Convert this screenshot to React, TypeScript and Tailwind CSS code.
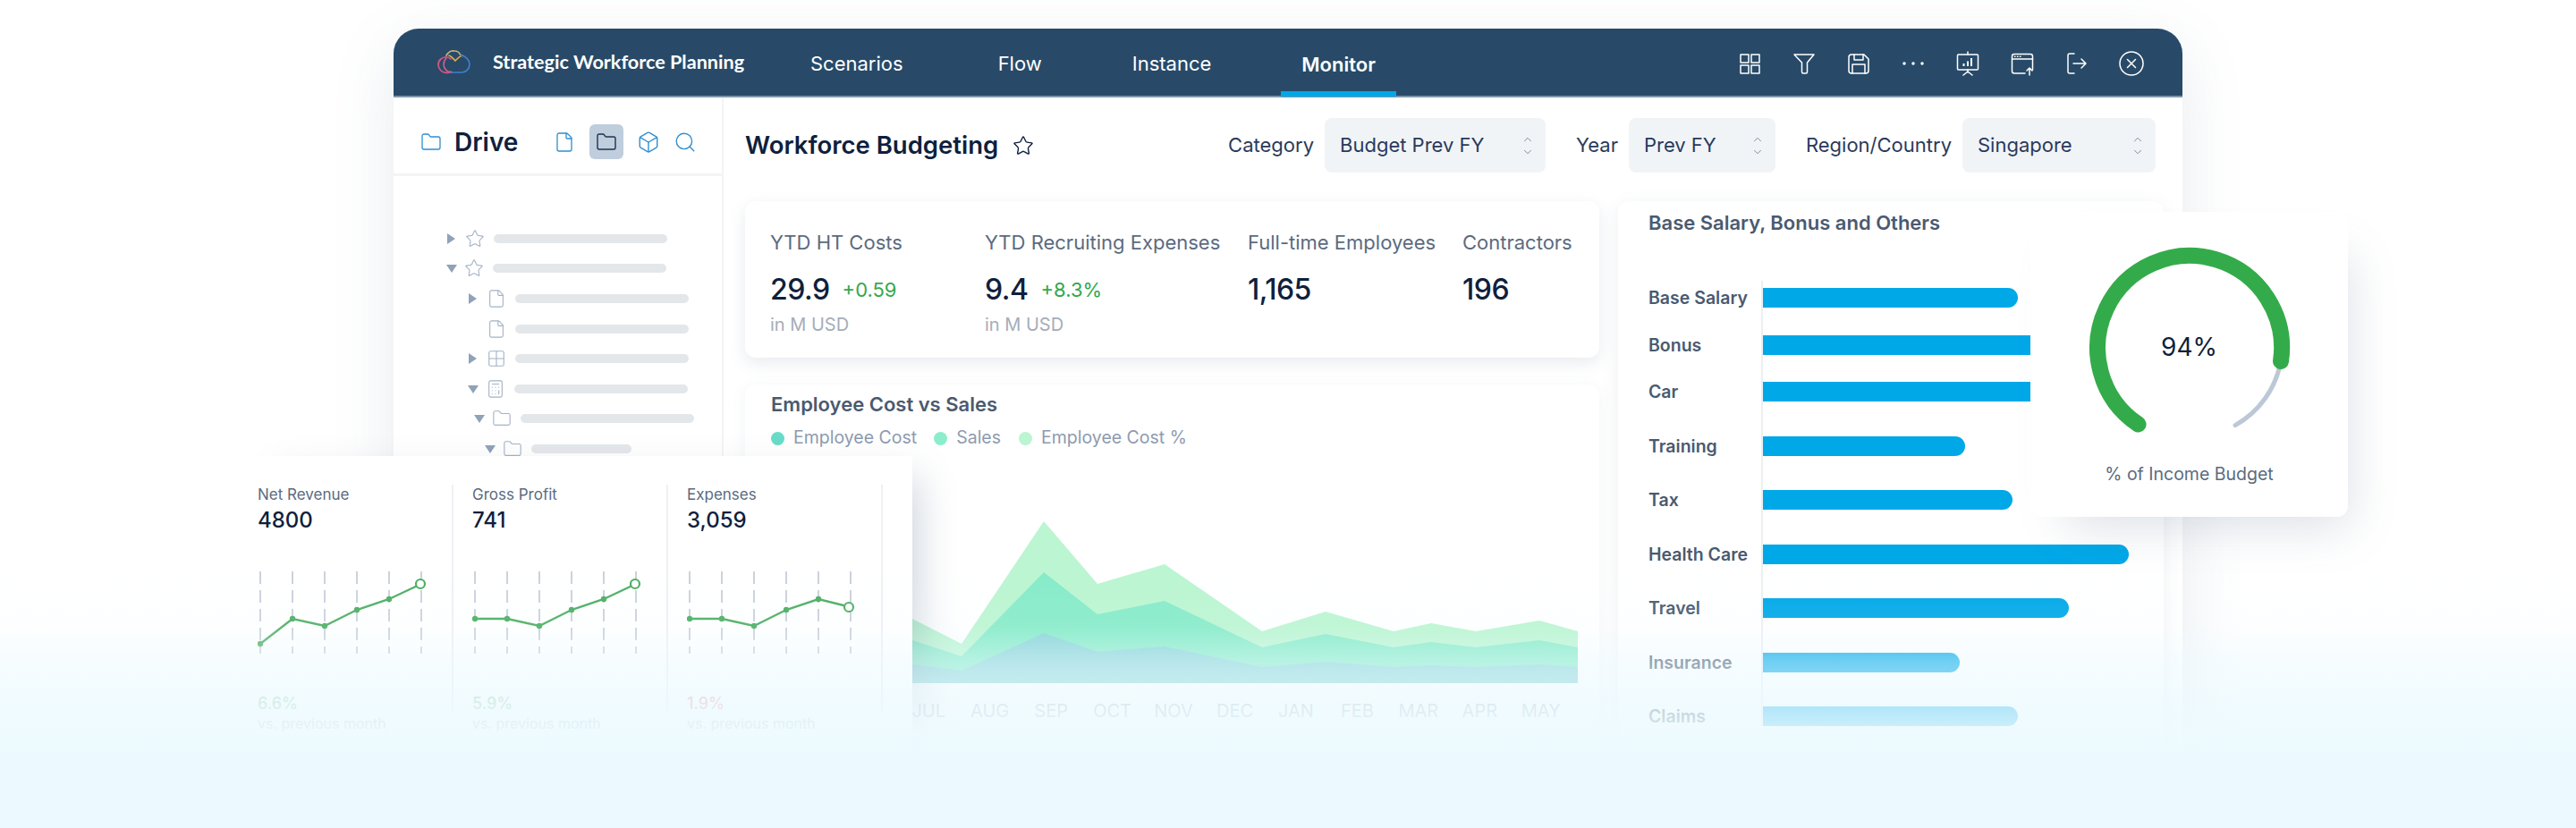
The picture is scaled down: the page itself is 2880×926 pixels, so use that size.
import React from 'react';
import { Box, ChevronDown, ChevronUp, File, Folder, Grid2x2, Calculator, Search, Star } from 'lucide-react';

const navItems = [
  { label: 'Scenarios', cls: 'ml-[50px]' },
  { label: 'Flow', cls: 'ml-[60px]' },
  { label: 'Instance', cls: 'ml-[55px]' },
];

const kpis = [
  { label: 'YTD HT Costs', value: '29.9', delta: '+0.59', sub: 'in M USD', width: 'w-[240px]' },
  { label: 'YTD Recruiting Expenses', value: '9.4', delta: '+8.3%', sub: 'in M USD', width: 'w-[294px]' },
  { label: 'Full-time Employees', value: '1,165', delta: '', sub: '', width: 'w-[240px]' },
  { label: 'Contractors', value: '196', delta: '', sub: '', width: 'w-[150px]' },
];

const bars = [
  { label: 'Base Salary', width: 285, pad: 'pt-[8px]' },
  { label: 'Bonus', width: 330, pad: 'pt-[31px]' },
  { label: 'Car', width: 330, pad: 'pt-[30px]' },
  { label: 'Training', width: 226, pad: 'pt-[39px]' },
  { label: 'Tax', width: 279, pad: 'pt-[38px]' },
  { label: 'Health Care', width: 409, pad: 'pt-[39px]' },
  { label: 'Travel', width: 342, pad: 'pt-[38px]' },
  { label: 'Insurance', width: 220, pad: 'pt-[39px]' },
  { label: 'Claims', width: 285, pad: 'pt-[38px]' },
];

const months = ['JUL', 'AUG', 'SEP', 'OCT', 'NOV', 'DEC', 'JAN', 'FEB', 'MAR', 'APR', 'MAY'];

const chartX = [1020, 1075, 1167, 1227, 1302, 1411, 1482, 1558, 1600, 1650, 1721, 1764];
const layers = [
  { fill: '#bbf5d1', ys: [692, 720, 583, 653, 631, 706, 684, 706, 697, 706, 694, 706] },
  { fill: '#86ebc8', ys: [716, 734, 640, 687, 672, 724, 709, 724, 718, 724, 716, 724] },
  { fill: '#88d4d8', ys: [743, 750, 708, 729, 723, 746, 740, 746, 744, 746, 743, 746] },
];

const sparkX = [3, 39, 75, 111, 147, 183];
const sparks = [
  { label: 'Net Revenue', value: '4800', pct: '6.6%', pctColor: 'text-[#9fd3ad]', ys: [81, 53, 61, 43, 31, 14], lastX: 182 },
  { label: 'Gross Profit', value: '741', pct: '5.9%', pctColor: 'text-[#9fd3ad]', ys: [53, 53, 61, 43, 31, 14], lastX: 182 },
  { label: 'Expenses', value: '3,059', pct: '1.9%', pctColor: 'text-[#eda3ae]', ys: [53, 53, 61, 43, 31, 40], lastX: 181 },
];

const tree = [
  { pad: 'pl-[59px]', tri: 'right', icon: 'star', bar: 'w-[194px]' },
  { pad: 'pl-[58px]', tri: 'down', icon: 'star', bar: 'w-[194px]' },
  { pad: 'pl-[83px]', tri: 'right', icon: 'file', bar: 'w-[194px]' },
  { pad: 'pl-[83px]', tri: 'none', icon: 'file', bar: 'w-[194px]' },
  { pad: 'pl-[83px]', tri: 'right', icon: 'grid', bar: 'w-[194px]' },
  { pad: 'pl-[82px]', tri: 'down', icon: 'calc', bar: 'w-[194px]' },
  { pad: 'pl-[89px]', tri: 'down', icon: 'folder', bar: 'w-[194px]' },
  { pad: 'pl-[101px]', tri: 'down', icon: 'folder', bar: 'w-[112px]' },
];

const Triangle = ({ dir }: { dir: string }) => (
  <svg width="14" height="14" viewBox="0 0 14 14" className="shrink-0">
    {dir === 'right' && <polygon points="1,1 10,7 1,13" fill="#8fa2b8" />}
    {dir === 'down' && <polygon points="1,3 13,3 7,12" fill="#8fa2b8" />}
  </svg>
);

const TreeIcon = ({ name }: { name: string }) => {
  const cls = 'shrink-0 text-[#a3b2c6]';
  if (name === 'star') return <Star size={22} strokeWidth={1.2} className={cls} />;
  if (name === 'file') return <File size={22} strokeWidth={1.2} className={cls} />;
  if (name === 'grid') return <Grid2x2 size={22} strokeWidth={1.2} className={cls} />;
  if (name === 'calc') return <Calculator size={22} strokeWidth={1.2} className={cls} />;
  return <Folder size={22} strokeWidth={1.2} className={cls} />;
};

const Logo = () => (
  <svg width="60" height="42" viewBox="0 0 60 42" fill="none" strokeWidth="1.7" strokeLinecap="round" className="shrink-0">
    <path d="M24 31C21 33 16 33 13 30C9 26 9 20 13 17C16 14 21 14 24 17" stroke="#d9597c" />
    <path d="M25 32C20 32 16 28 16 23C16 20 17 18 19 16" stroke="#c65f8f" />
    <path d="M19 13C21 9 25 7.5 28 8C31 8 34 10 35 13" stroke="#c3b27a" />
    <path d="M22 13C25 14 27 17 29 19C31 17 33 14 37 13" stroke="#e0a650" />
    <path d="M35 13C40 13 45 18 45 23C45 28 41 32 36 32H25" stroke="#3f80cf" />
  </svg>
);

const HeaderIcon = ({ children }: { children: React.ReactNode }) => (
  <svg width="28" height="28" viewBox="0 0 28 28" fill="none" stroke="white" strokeWidth="1.5" strokeLinecap="round" strokeLinejoin="round" className="shrink-0">
    {children}
  </svg>
);

const Select = ({ value, width }: { value: string; width: string }) => (
  <div className={`${width} h-[61px] ml-[12px] pl-[17px] pr-[13px] flex items-center justify-between bg-[#f1f4f7] rounded-lg text-[22px] text-[#2a3a5c]`}>
    <span>{value}</span>
    <span className="flex flex-col items-center text-[#6f7c8f]">
      <ChevronUp size={14} strokeWidth={1.5} />
      <ChevronDown size={14} strokeWidth={1.5} />
    </span>
  </div>
);

const App = () => {
  return (
    <div className="relative w-[2880px] h-[926px] overflow-hidden bg-white font-['Inter',sans-serif]">
      <div className="mx-auto mt-[32px] w-[2000px] h-[894px] bg-white rounded-t-[28px] shadow-[0_20px_70px_rgba(90,110,140,0.14)]">
        {/* top bar */}
        <header className="h-[77px] flex items-center bg-[#284a68] rounded-t-[28px] border-b-2 border-[#7f96ab]">
          <div className="pl-[40px] w-[111px]">
            <Logo />
          </div>
          <div className="w-[282px] whitespace-nowrap font-['Lato',sans-serif] font-bold text-[21.6px] text-white">
            Strategic Workforce Planning
          </div>
          {navItems.map((n) => (
            <div key={n.label} className={`${n.cls} px-[23px] h-full pt-[3px] flex items-center text-[22px] text-white`}>
              {n.label}
            </div>
          ))}
          <div className="ml-[55px] px-[23px] h-full flex items-center text-[22px] font-semibold text-white border-b-[6px] border-[#00a8e8] pt-[9px] translate-y-[1px]">
            Monitor
          </div>
          <div className="ml-auto pr-[43px] pt-[2px] flex items-center gap-[33px]">
            <HeaderIcon>
              <rect x="4" y="4" width="9" height="9" />
              <rect x="16" y="4" width="9" height="9" />
              <rect x="4" y="16" width="9" height="9" />
              <rect x="16" y="16" width="9" height="9" />
            </HeaderIcon>
            <HeaderIcon>
              <path d="M3 4H25L17.5 13V23.5C17.5 24.5 17 25 16 25H13C12 25 11.5 24.5 11.5 23.5V13Z" />
            </HeaderIcon>
            <HeaderIcon>
              <path d="M6 4H20L25 9V22C25 24 24 25 22 25H6C4 25 3 24 3 22V7C3 5 4 4 6 4Z" />
              <path d="M9 4V10H19V4" />
              <path d="M7 25V15H21V25" />
            </HeaderIcon>
            <HeaderIcon>
              <circle cx="4" cy="14" r="1" fill="white" />
              <circle cx="14" cy="14" r="1" fill="white" />
              <circle cx="24" cy="14" r="1" fill="white" />
            </HeaderIcon>
            <HeaderIcon>
              <path d="M14 1V4" />
              <rect x="2.5" y="4" width="23" height="17" rx="1" />
              <path d="M14 21V24M14 23L9 27M14 23L19 27" />
              <path d="M9.5 17V14M14 17V11.5M18 17V8" strokeWidth="2" strokeLinecap="butt" />
            </HeaderIcon>
            <HeaderIcon>
              <path d="M17 25H5C3.5 25 2.5 24 2.5 22.5V6C2.5 4.5 3.5 3.5 5 3.5H23C24.5 3.5 25.5 4.5 25.5 6V21" />
              <path d="M2.5 9H25.5" />
              <path d="M5.5 6.2H6M8.5 6.2H9M11.5 6.2H12" />
              <path d="M22 27V19M19 22L22 19L25 22" />
            </HeaderIcon>
            <HeaderIcon>
              <path d="M11 3H6C5 3 4 4 4 5V23C4 24 5 25 6 25H11" />
              <path d="M10 14H24M19 9L24 14L19 19" />
            </HeaderIcon>
            <HeaderIcon>
              <circle cx="14" cy="14" r="13" />
              <path d="M9.5 9.5L18.5 18.5M18.5 9.5L9.5 18.5" />
            </HeaderIcon>
          </div>
        </header>

        <div className="flex">
          {/* sidebar */}
          <aside className="w-[369px] shrink-0 h-[760px] border-r-2 border-[#f3f4f6]">
            <div className="h-[88px] pt-[14px] flex items-center border-b-[3px] border-[#f3f4f6] pl-[30px]">
              <Folder size={24} strokeWidth={1.3} className="text-[#2f8fd0]" />
              <span className="ml-[14px] text-[28px] font-semibold text-[#0f1f3d]">Drive</span>
              <File size={24} strokeWidth={1.3} className="ml-[40px] text-[#2f8fd0]" />
              <span className="ml-[16px] w-[38px] h-[39px] rounded-md bg-[#bfcddd] flex items-center justify-center">
                <Folder size={24} strokeWidth={1.4} className="text-[#1f3350]" />
              </span>
              <Box size={26} strokeWidth={1.3} className="ml-[15px] text-[#2f8fd0]" />
              <Search size={26} strokeWidth={1.3} className="ml-[15px] text-[#2f8fd0]" />
            </div>
            <div className="pt-[53px]">
              {tree.map((t, i) => (
                <div key={i} className={`h-[33.6px] flex items-center ${t.pad}`}>
                  <Triangle dir={t.tri} />
                  <span className="ml-[7px]">
                    <TreeIcon name={t.icon} />
                  </span>
                  <span className={`ml-[10px] ${t.bar} h-[10px] rounded-full bg-[#e4e7ea]`} />
                </div>
              ))}
            </div>
          </aside>

          {/* main */}
          <main className="flex-1 min-w-0">
            <div className="h-[116px] pt-[23px] pl-[24px] pr-[30px] flex items-start">
              <div className="h-[61px] flex items-center whitespace-nowrap">
                <span className="text-[27.5px] font-semibold text-[#0f1f3d]">Workforce Budgeting</span>
                <Star size={24} strokeWidth={1.4} className="ml-[16px] text-[#0f1f3d]" />
              </div>
              <div className="ml-auto flex items-center text-[22px] text-[#2a3a5c] whitespace-nowrap">
                <span>Category</span>
                <Select value="Budget Prev FY" width="w-[247px]" />
                <span className="ml-[34px]">Year</span>
                <Select value="Prev FY" width="w-[164px]" />
                <span className="ml-[34px]">Region/Country</span>
                <Select value="Singapore" width="w-[216px]" />
              </div>
            </div>

            <div className="pl-[24px] flex gap-[21px]">
              <div className="w-[955px] shrink-0">
                <section className="h-[175px] pl-[28px] pt-[33px] flex bg-white rounded-xl shadow-[0_6px_18px_rgba(90,110,140,0.14)]">
                  {kpis.map((k) => (
                    <div key={k.label} className={`${k.width} shrink-0 whitespace-nowrap`}>
                      <div className="h-[26px] leading-[26px] text-[22px] text-[#5b6b80]">{k.label}</div>
                      <div className="mt-[14px] h-[52px] flex items-center">
                        <span className="text-[32px] font-medium tracking-[-0.5px] text-[#0f1f3d]">{k.value}</span>
                        {k.delta && <span className="ml-[14px] text-[22px] text-[#33a84c]">{k.delta}</span>}
                      </div>
                      <div className="mt-[1px] h-[24px] leading-[24px] text-[20px] text-[#a5adb9]">{k.sub}</div>
                    </div>
                  ))}
                </section>

                <section className="mt-[30px] h-[470px] pt-[8px] bg-white rounded-xl shadow-[0_4px_18px_rgba(90,110,140,0.08)]">
                  <h3 className="pl-[29px] h-[28px] leading-[28px] text-[22px] font-semibold text-[#4a5a70]">
                    Employee Cost vs Sales
                  </h3>
                  <div className="pl-[29px] mt-[10px] h-[28px] flex items-center text-[19.5px] text-[#8d9bb0]">
                    <span className="w-[15px] h-[15px] rounded-full bg-[#68dcc8]" />
                    <span className="ml-[10px]">Employee Cost</span>
                    <span className="ml-[19px] w-[15px] h-[15px] rounded-full bg-[#8cedcc]" />
                    <span className="ml-[10px]">Sales</span>
                    <span className="ml-[20px] w-[15px] h-[15px] rounded-full bg-[#bbf5d1]" />
                    <span className="ml-[10px]">Employee Cost %</span>
                  </div>
                  <svg width="744" height="224" viewBox="1020 540 744 224" className="ml-[187px] mt-[36px] block">
                    {layers.map((l) => (
                      <polygon
                        key={l.fill}
                        fill={l.fill}
                        points={`1020,764 ${chartX.map((x, i) => `${x},${l.ys[i]}`).join(' ')} 1764,764`}
                      />
                    ))}
                  </svg>
                  <div className="ml-[171px] mt-[16px] w-[753px] grid grid-cols-11 text-center text-[20px] text-[#b4c0d0]">
                    {months.map((m) => (
                      <span key={m}>{m}</span>
                    ))}
                  </div>
                </section>
              </div>

              <section className="w-[610px] shrink-0 h-[760px] pl-[34px] pt-[10px] bg-white rounded-xl shadow-[0_4px_18px_rgba(90,110,140,0.1)]">
                <h3 className="h-[28px] leading-[28px] text-[22px] font-semibold text-[#4a5a70]">
                  Base Salary, Bonus and Others
                </h3>
                <div className="mt-[51px]">
                  {bars.map((b) => (
                    <div key={b.label} className="flex items-end">
                      <div className="w-[126px] leading-[22px] text-[19.5px] font-semibold text-[#4a5a70]">{b.label}</div>
                      <div className={`flex-1 border-l-2 border-[#eceff3] ${b.pad}`}>
                        <div className="h-[22px] rounded-r-full bg-[#00a8e8]" style={{ width: b.width }} />
                      </div>
                    </div>
                  ))}
                </div>
              </section>
            </div>
          </main>
        </div>
      </div>

      {/* floating sparkline card */}
      <div className="absolute left-[257px] top-[510px] w-[763px] h-[340px] pl-[10px] pt-[32px] flex bg-white shadow-[30px_0_40px_-24px_rgba(90,110,140,0.3)]">
        {sparks.map((s) => (
          <div key={s.label} className="w-[240px] h-[256px] pl-[21px] border-r-2 border-[#eef0f4] shrink-0">
            <div className="h-[22px] leading-[22px] text-[17px] text-[#5b6b80]">{s.label}</div>
            <div className="mt-[3px] h-[30px] leading-[30px] text-[24px] font-medium text-[#0f1f3d]">{s.value}</div>
            <svg width="196" height="92" viewBox="0 0 196 92" fill="none" className="mt-[42px] block">
              {sparkX.map((x) => (
                <line key={x} x1={x} x2={x} y1="0" y2="92" stroke="#bfc7d6" strokeWidth="1.6" strokeDasharray="14 7" />
              ))}
              <polyline points={s.ys.map((y, i) => `${sparkX[i]},${y}`).join(' ')} stroke="#4cae63" strokeWidth="2.4" />
              {s.ys.slice(0, 5).map((y, i) => (
                <circle key={i} cx={sparkX[i]} cy={y} r="3.2" fill="#4cae63" />
              ))}
              <circle cx={s.lastX} cy={s.ys[5]} r="5" fill="white" stroke="#4cae63" strokeWidth="2.2" />
            </svg>
            <div className={`mt-[45px] h-[22px] leading-[22px] text-[18px] font-medium ${s.pctColor}`}>{s.pct}</div>
            <div className="h-[22px] leading-[22px] text-[16px] text-[#b4c0d0] whitespace-nowrap">vs. previous month</div>
          </div>
        ))}
      </div>

      {/* floating gauge card */}
      <div className="absolute left-[2270px] top-[237px] w-[355px] h-[341px] bg-white rounded-xl shadow-[20px_30px_50px_-20px_rgba(90,110,140,0.22)] flex flex-col items-center">
        <div className="relative mt-[27px] w-[240px] h-[220px]">
          <svg width="240" height="220" viewBox="2328 264 240 220" fill="none" strokeLinecap="round" className="block">
            <path d="M2550 404A103 103 0 0 1 2499 475.6" stroke="#bcc8d6" strokeWidth="5" />
            <path d="M2390.6 474.5A103 103 0 1 1 2550 404" stroke="#34ab4a" strokeWidth="18" />
          </svg>
          <div className="absolute inset-x-0 top-[104px] text-center text-[28px] leading-[40px] text-[#0f1f3d]">94%</div>
        </div>
        <div className="mt-[33px] text-[19.5px] leading-[26px] text-[#5b6b80]">% of Income Budget</div>
      </div>

      {/* bottom fade */}
      <div className="absolute inset-x-0 bottom-0 h-[286px] pointer-events-none bg-[linear-gradient(to_bottom,rgba(236,250,255,0)_0px,rgba(236,250,255,0.1)_60px,rgba(236,250,255,0.48)_100px,rgba(236,250,255,0.8)_160px,rgba(236,250,255,1)_205px,rgba(236,250,255,1)_286px)]" />
    </div>
  );
};

export default App;
